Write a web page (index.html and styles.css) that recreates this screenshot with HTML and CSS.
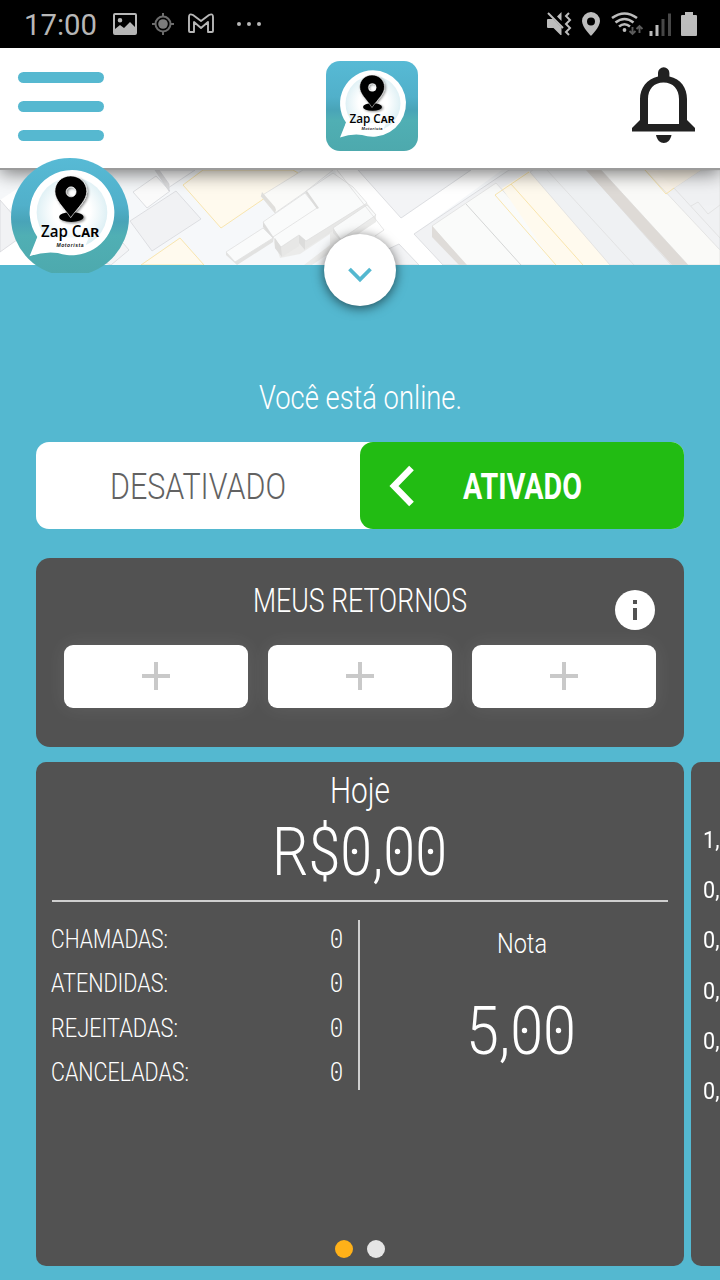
FILE: index.html
```html
<!DOCTYPE html>
<html lang="pt-BR">
<head>
<meta charset="utf-8">
<title>Zap Car Motorista</title>
<link rel="stylesheet" href="styles.css">
</head>
<body>
<svg class="defs" width="0" height="0" aria-hidden="true">
  <defs>
    <linearGradient id="brand" x1="0" y1="0" x2="0" y2="1">
      <stop offset="0" stop-color="#57bad5"/><stop offset=".4" stop-color="#51b0ca"/><stop offset=".54" stop-color="#49a4b8"/><stop offset=".66" stop-color="#50afb4"/><stop offset="1" stop-color="#4da9ad"/>
    </linearGradient>
    <radialGradient id="glass" cx=".5" cy=".48" r=".52">
      <stop offset=".5" stop-color="#fff"/><stop offset="1" stop-color="#dceff4"/>
    </radialGradient>
    <filter id="soft" x="-30%" y="-30%" width="170%" height="170%"><feDropShadow dx="1.2" dy="1" stdDeviation="1" flood-opacity=".45"/></filter>
    <symbol id="bubble" viewBox="0 0 92 90">
      <path fill="#fff" d="M47 9.300a33.200 33.200 0 1 1-11 64.600Q25 72.500 14 76.500L20 61.500A33.200 33.200 0 0 1 47 9.300Z"/>
      <circle cx="47" cy="42.500" r="27.500" fill="url(#glass)"/>
      <path fill="#fff" d="M20 62h40l-4 10H17z"/>
      <g filter="url(#soft)"><ellipse cx="46.500" cy="46" rx="9.500" ry="3.800"/>
      <path stroke="#fff" stroke-width=".5" fill-rule="evenodd" d="M46 14c-7 0-12.300 5.300-12.300 12 0 7 6.500 12 12.300 20.500C52 38 58.500 33 58.500 26 58.500 19.300 53 14 46 14zm.300 8.500a3.900 3.900 0 1 1 0 7.800 3.900 3.900 0 0 1 0-7.800z"/></g>
    </symbol>
  </defs>
</svg>

<div class="screen">
  <div class="status">
    <span class="clock"><svg width="74" height="30"><text x="0" y="24" textLength="73" lengthAdjust="spacingAndGlyphs">17:00</text></svg></span>
    <svg class="status-left" width="150" height="30" viewBox="112 9 150 30" fill="#b8b8b8">
      <path fill-rule="evenodd" d="M115 13h20q2 0 2 2v18q0 2-2 2h-20q-2 0-2-2V15q0-2 2-2zm0 2v14l5-4 4 3 6-6 5 5V15zm5 3a2.300 2.300 0 1 1 0 4.600 2.300 2.300 0 0 1 0-4.600z"/>
      <g fill="none" stroke="#6d6d6d" stroke-width="2"><circle cx="163" cy="24" r="7.500"/><path d="M163 13v4m0 14v4m-11-11h4m14 0h4"/></g><circle cx="163" cy="24" r="4.800" fill="#7c7c7c"/>
      <path fill="none" stroke="#b8b8b8" stroke-width="1.900" stroke-linejoin="round" d="M189 17q0-4 4-2l8 6 8-6q4-2 4 2v14q0 1-1 1h-4V22l-7 6-7-6v10h-4q-1 0-1-1z"/>
      <circle cx="239" cy="24" r="2"/><circle cx="249" cy="24" r="2"/><circle cx="259" cy="24" r="2"/>
    </svg>
    <svg class="status-right" width="156" height="30" viewBox="544 9 156 30" fill="#bdbdbd">
      <path d="M547 20q0-1 1-1h5l8.500 8.500V35h-1l-7-7H548q-1 0-1-1zM561.500 12v9l-4.500-4.500z"/>
      <path fill="none" stroke="#bdbdbd" stroke-width="2" d="m548 13 15 15m6-15-3 3 4 4-4 4 4 4-4 4 3 3"/>
      <path fill-rule="evenodd" d="M591 12a9 9 0 0 1 9 9c0 6-9 15-9 15s-9-9-9-15a9 9 0 0 1 9-9zm0 5.500a4 4 0 1 0 0 8 4 4 0 0 0 0-8z"/>
      <g fill="none" stroke="#bdbdbd" stroke-width="2.600"><path d="M612 18q12.500-9 25 0M615.500 22.500q9-7 18 0M619 26.500q5.500-4.500 11 0"/></g><circle cx="624.500" cy="30" r="1.900"/>
      <path fill="none" stroke="#5d5d5d" stroke-width="1.900" d="M632.500 27v7m-3-3 3 3 3-3M639.500 33v-7m-3 3 3-3 3 3"/>
      <path d="M649.500 31h3v5h-3zM655.500 25h3v11h-3z"/><path fill="#484848" d="M661.500 19h3v17h-3zM668 13.500h3V36h-3z"/>
      <path d="M685 12h8v3h3q1 0 1 1v19q0 1-1 1h-14q-1 0-1-1V16q0-1 1-1h3z"/>
    </svg>
  </div>

  <header class="topbar">
    <div class="menu"><i></i><i></i><i></i></div>
    <svg class="logo" width="92" height="90" viewBox="0 0 92 90">
      <rect width="92" height="90" rx="14" fill="url(#brand)"/><use href="#bubble" width="92" height="90"/>
      <text class="brand-name" x="23.500" y="62" textLength="45" lengthAdjust="spacingAndGlyphs">Zap Cᴀʀ</text>
      <text class="brand-sub" x="35.500" y="69.200" textLength="21">Motorista</text>
    </svg>
    <svg class="bell" width="64" height="78" viewBox="632 67 64 78" fill="#212121">
      <path fill-rule="evenodd" d="M658 76.500V73a5.700 5.700 0 0 1 11.400 0v3.500C681 79 687 88 687 99v21l8 8v3.500h-63V128l8-8V99c0-11 7-20 18-22.500zM648 124h31V99c0-10-6-16.500-15.500-16.500S648 89 648 99z"/>
      <path d="M656 135h15.500c-1 5-4 8-7.700 8s-6.800-3-7.800-8z"/>
    </svg>
  </header>

  <div class="map">
    <svg width="720" height="95" viewBox="0 170 720 95">
      <rect y="170" width="720" height="95" fill="#f6f8fa"/>
      <g fill="#fff"><path d="M0 200 45 170h22L0 215zM0 222 62 265H0z"/><path d="M335 170h25l42 48 69-48h31l-88 64 31 31h-45l-18-21-18 14z"/></g>
      <g stroke="#d7d8dc" stroke-width=".8">
        <path fill="#f1f2f4" d="m130 221 46-30 25 28-49 32zM0 200l28 32-28 20zM414 234l95-64h211v95H443z"/>
        <path fill="#fbfbfb" d="m133 192 23-16 14 15-23 17zM156 170l12 18 27-18z"/><path fill="#dededf" d="M155 170h4l10 14v7z"/>
        <path fill="#f3f4f6" d="M358 170h113l-70 48zM382 252l17-8 20 21h-46zM98 260l25-17 6 7-18 15z"/>
      </g>
      <g fill="#fffaee" stroke="#f8df9c" stroke-width=".8"><path d="m183 185 20-15h90l5 3-36 27-41 28zM141 265l39-27 24 27z"/><path stroke="none" fill="#fcf5ea" d="M645 170h56l-27 18-9 7z"/></g>
      <g stroke="#dddddc" stroke-width=".7">
        <path fill="#fbfbf9" d="m261 196 42-26h30l-28 22-30 21z"/>
        <path fill="#e0dfdc" stroke="none" d="m261 196 14 17 1-3-1-3-13-15z"/>
        <path fill="#ebebea" stroke="none" d="m273 237 94-34 9 12v7l-64 43h-8l26-20v-11l-30 20-20 4z"/>
        <path fill="#e7e7e6" stroke="none" d="m273 237 2 11 7 9 17-11v-11l6 14 62-40v-4l-70 20z"/>
        <path fill="#fafbfb" d="m305 192 28-19 20 14 14 16-61 38-7-6-18 12-8-10z"/>
        <path fill="#fafbfb" d="m263 222 42-29 12 15-44 29z"/>
        <path fill="#dcdcdb" stroke="none" d="m263 222 10 15v2l-10-12zM305 192l12 17 2-1-12-17zM299 235l6 5v10l-6-7zM275 238l6 9 1 10-7-9z"/>
        <path fill="#fafbfb" d="m226 252 37-24 10 10-38 24z"/><path fill="#e2e2e1" stroke="none" d="m226 252 9 10 38-24v4l-36 23-11-10z"/>
        <path fill="#f9fafa" d="m333 228 34-23 9 10-36 25z"/><path fill="#e0e0df" stroke="none" d="m333 228 8 11v2l-8-8z"/>
        <path fill="none" d="m337 170 47 60-9 6"/>
        <path fill="#fafbfa" d="m432 226 64-43 69 77-8 5h-92z"/><path fill="#dfdcd9" stroke="none" d="M432 226v11l27 28h8z"/>
        <path fill="none" stroke="#c4c5c6" d="m466 204 55 61"/>
        <path fill="#fffaee" stroke="none" d="m502 188 27-17 82 94h-56l-2-2z"/>
        <path fill="#eff1f3" d="m530 172 3-2h54l84 95h-61z"/><path fill="none" d="m547 170 87 95"/>
        <path fill="#fafaf8" d="M601 170h44l75 80v15h-32z"/><path fill="#dedad6" stroke="none" d="M586 170h15l87 95h-16z"/>
        <path fill="#f0f1f3" d="m674 188 27-18h19v68zm17 18 7-4 10 12 12-9"/><path fill="#fbf4e8" stroke="none" d="M657 170h44l-27 18z"/>
      </g>
      <path fill="none" stroke="#f8df9c" stroke-width=".8" d="m556 265-61-70 34-23m-18 12 72 81M645 170l21 24 8-6"/>
    </svg>
  </div>

  <svg class="avatar" width="118" height="115" viewBox="11 158 118 115">
    <circle cx="70" cy="217" r="59" fill="url(#brand)"/>
    <use href="#bubble" x="11.600" y="157.900" width="118.200" height="115.700"/>
    <text class="brand-name big" x="41" y="237" textLength="58" lengthAdjust="spacingAndGlyphs">Zap Cᴀʀ</text>
    <text class="brand-sub big" x="56.500" y="246.500" textLength="27">Motorista</text>
  </svg>
  <div class="collapse"><svg width="24" height="16" viewBox="0 0 24 16"><path d="m1.500 2 10.500 10.500L22.500 2"/></svg></div>

  <main class="panel">
    <svg class="label online" width="204" height="44"><text x="1" y="33" font-size="34" textLength="203" lengthAdjust="spacingAndGlyphs">Você está online.</text></svg>

    <div class="toggle">
      <div class="off"><svg class="label" width="176" height="44"><text x="0" y="34.500" font-size="36" textLength="176" lengthAdjust="spacingAndGlyphs">DESATIVADO</text></svg></div>
      <div class="on">
        <svg class="chev" width="26" height="42" viewBox="0 0 26 42"><path d="M22.500 3 5 21l17.500 18"/></svg>
        <svg class="label strong" width="120" height="44"><text x="0" y="34.500" font-size="37" textLength="119" lengthAdjust="spacingAndGlyphs">ATIVADO</text></svg>
      </div>
    </div>

    <section class="returns">
      <div class="returns-head">
        <svg class="label" width="214" height="44"><text x="0" y="33" font-size="34" textLength="214" lengthAdjust="spacingAndGlyphs">MEUS RETORNOS</text></svg>
        <svg class="info" width="40" height="40"><circle cx="20" cy="20" r="20" fill="#fff"/><path fill="#525252" d="M18 10h4v4h-4zm0 8h4v12h-4z"/></svg>
      </div>
      <div class="slots">
        <div><svg width="28" height="28"><path d="M14 0v28M0 14h28"/></svg></div>
        <div><svg width="28" height="28"><path d="M14 0v28M0 14h28"/></svg></div>
        <div><svg width="28" height="28"><path d="M14 0v28M0 14h28"/></svg></div>
      </div>
    </section>

    <div class="carousel">
      <section class="today">
        <svg class="label" width="60" height="50"><text x="0" y="41" font-size="36" textLength="60" lengthAdjust="spacingAndGlyphs">Hoje</text></svg>
        <svg class="label" width="172" height="88"><text x="-2" y="63" font-size="66" textLength="175" lengthAdjust="spacingAndGlyphs">R$0,00</text><g fill="#fff"><circle cx="80.500" cy="39.500" r="2.700"/><circle cx="123.500" cy="39.500" r="2.700"/><circle cx="156.500" cy="39.500" r="2.700"/></g></svg>
        <hr>
        <div class="details">
          <div class="counts">
            <div><svg class="label" width="117" height="30"><text x="0" y="24" font-size="25.500" textLength="117" lengthAdjust="spacingAndGlyphs">CHAMADAS:</text></svg><svg class="label" width="13" height="30"><text x="0" y="24" font-size="25.500" textLength="13" lengthAdjust="spacingAndGlyphs">0</text><circle cx="6.500" cy="15" r="1.300" fill="#fff"/></svg></div>
            <div><svg class="label" width="117" height="30"><text x="0" y="24" font-size="25.500" textLength="117" lengthAdjust="spacingAndGlyphs">ATENDIDAS:</text></svg><svg class="label" width="13" height="30"><text x="0" y="24" font-size="25.500" textLength="13" lengthAdjust="spacingAndGlyphs">0</text><circle cx="6.500" cy="15" r="1.300" fill="#fff"/></svg></div>
            <div><svg class="label" width="127" height="30"><text x="0" y="24" font-size="25.500" textLength="127" lengthAdjust="spacingAndGlyphs">REJEITADAS:</text></svg><svg class="label" width="13" height="30"><text x="0" y="24" font-size="25.500" textLength="13" lengthAdjust="spacingAndGlyphs">0</text><circle cx="6.500" cy="15" r="1.300" fill="#fff"/></svg></div>
            <div><svg class="label" width="138" height="30"><text x="0" y="24" font-size="25.500" textLength="138" lengthAdjust="spacingAndGlyphs">CANCELADAS:</text></svg><svg class="label" width="13" height="30"><text x="0" y="24" font-size="25.500" textLength="13" lengthAdjust="spacingAndGlyphs">0</text><circle cx="6.500" cy="15" r="1.300" fill="#fff"/></svg></div>
          </div>
          <div class="rating">
            <svg class="label" width="50" height="40"><text x="0" y="33" font-size="28" textLength="50" lengthAdjust="spacingAndGlyphs">Nota</text></svg>
            <svg class="label" width="106" height="90"><text x="-3" y="74" font-size="66" textLength="110" lengthAdjust="spacingAndGlyphs">5,00</text><g fill="#fff"><circle cx="55.500" cy="50.500" r="2.700"/><circle cx="89.500" cy="50.500" r="2.700"/></g></svg>
          </div>
        </div>
        <div class="dots"><i class="current"></i><i></i></div>
      </section>
      <section class="next">
        <span>1,</span><span>0,</span><span>0,</span><span>0,</span><span>0,</span><span>0,</span>
      </section>
    </div>
  </main>
</div>
</body>
</html>
```
FILE: styles.css
```css
* { box-sizing: border-box; }
body { margin: 0; font-family: Roboto, "Liberation Sans", sans-serif; }
.defs { position: absolute; }
.screen { position: relative; width: 720px; height: 1280px; overflow: hidden; background: #54b8d0; }
svg { display: block; flex: none; }

.status { display: flex; align-items: flex-start; height: 48px; padding: 9px 20px 0 24px; background: #000; }
.clock text { font-size: 30px; fill: #b8b8b8; font-weight: 400; }
.clock svg { margin-top: 2px; overflow: visible; }
.status-left { margin-left: 14px; }
.status-right { margin-left: auto; }

.topbar { position: relative; z-index: 2; display: flex; justify-content: space-between; align-items: flex-start; height: 122px; padding: 13px 24px 0 18px; background: #fff; border-bottom: 2px solid #9b9b9b; box-shadow: 0 3px 18px rgba(0,0,0,.55); }
.menu { display: flex; flex-direction: column; gap: 18px; width: 86px; margin-top: 11px; }
.menu i { height: 11px; border-radius: 6px; background: #56b8d0; }
.logo { margin-left: 8px; }
.bell { margin-top: 6px; }
.brand-name { font: 600 13px "Open Sans", sans-serif; fill: #000; stroke: #fff; stroke-width: .5px; paint-order: stroke; }
.brand-sub { font: italic 700 4px "Liberation Sans", sans-serif; fill: #111; }
.brand-name.big { font-size: 17px; }
.brand-sub.big { font-size: 5px; }

.map { height: 95px; overflow: hidden; }
.avatar { position: absolute; z-index: 3; left: 11px; top: 158px; }
.collapse { position: absolute; z-index: 3; left: 324px; top: 234px; display: flex; align-items: center; justify-content: center; width: 72px; height: 72px; padding-top: 9px; border-radius: 50%; background: #fff; box-shadow: 0 2px 12px rgba(0,0,0,.6); }
.collapse path { fill: none; stroke: #54b8d0; stroke-width: 3.8; }

.panel { display: flex; flex-direction: column; padding: 111px 36px 0; }
.label { overflow: visible; }
.label text { font-family: Roboto, sans-serif; font-weight: 300; fill: #fff; }
.online { align-self: center; }
.toggle { display: flex; height: 87px; margin-top: 22px; border-radius: 13px; background: #fff; }
.off { display: flex; justify-content: center; width: 324px; padding-top: 22px; }
.off .label text { fill: #626262; }
.on { display: flex; width: 324px; padding: 22px 0 0 29px; border-radius: 13px; background: #22bc13; }
.chev { margin-top: 1px; }
.chev path { fill: none; stroke: #fff; stroke-width: 6.5; }
.on .label { margin-left: 48px; }
.on .label text { font-weight: 700; }

.returns { height: 189px; margin-top: 29px; padding: 21px 28px 0; border-radius: 14px; background: #525252; }
.returns-head { display: grid; grid-template-columns: 1fr auto 1fr; }
.returns-head .label { grid-column: 2; }
.info { justify-self: end; margin: 11px 1px 0 0; }
.slots { display: grid; grid-template-columns: repeat(3, 184px); gap: 20px; margin-top: 15px; }
.slots div { display: flex; align-items: center; justify-content: center; height: 63px; padding-bottom: 1px; border-radius: 9px; background: #fff; box-shadow: 0 0 20px rgba(255,255,255,.09); }
.slots path { stroke: #c9c9c9; stroke-width: 4; }

.carousel { display: flex; gap: 7px; height: 504px; margin-top: 15px; }
.today, .next { flex: none; width: 648px; border-radius: 10px; background: #525252; }
.today { display: flex; flex-direction: column; align-items: center; padding-bottom: 8px; }
hr { width: 616px; height: 2px; margin: 0; border: 0; background: #cfcfcf; }
.details { display: flex; width: 616px; margin-top: 18px; }
.counts { display: flex; flex-direction: column; gap: 14.3px; width: 308px; height: 170px; padding: 4px 15px 0 0; border-right: 2px solid #cfcfcf; }
.counts div { display: flex; justify-content: space-between; margin-left: -1px; }
.rating { display: flex; flex: 1; flex-direction: column; align-items: center; padding-left: 16px; gap: 20px; }
.dots { display: flex; gap: 14px; margin: auto 0 0; }
.dots i { width: 18px; height: 18px; border-radius: 50%; background: #e5e5e5; }
.dots .current { background: #ffb119; }
.next { display: flex; flex-direction: column; padding: 66px 0 0 12px; font-size: 24px; line-height: 25px; gap: 25.200px; color: #fff; }
.next span { display: block; width: 18px; transform: scaleX(.9); transform-origin: left; }
```
